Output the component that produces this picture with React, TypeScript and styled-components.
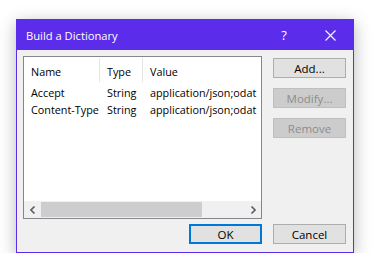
import React from "react";
import styled, { createGlobalStyle } from "styled-components";

const Global = createGlobalStyle`
  html, body { margin: 0; padding: 0; background: #ffffff; }
  body { font-family: "Open Sans", "Noto Sans", "Liberation Sans", sans-serif; }
  #root { padding: 19px 0 0 16px; }
`;

const Window = styled.div`
  width: 338px;
  height: 234px;
  box-sizing: border-box;
  border: 1px solid #5b2ce9;
  background: #f0f0f0;
  box-shadow: 0 4px 16px rgba(0, 0, 0, 0.28);
  display: flex;
  flex-direction: column;
`;

const TitleBar = styled.div`
  height: 30px;
  background: #5b2ce9;
  color: #ffffff;
  display: flex;
  align-items: center;
  padding-left: 9px;
  font-size: 11.2px;
`;

const Title = styled.div`
  flex: 1;
`;

const TitleButton = styled.div`
  width: 46px;
  height: 30px;
  display: flex;
  align-items: center;
  justify-content: center;
  font-size: 13px;
`;

const Body = styled.div`
  flex: 1;
  padding: 6px 7px 8px 6px;
  display: flex;
  flex-direction: column;
  gap: 5px;
`;

const TopRow = styled.div`
  display: flex;
  gap: 11px;
`;

const ListView = styled.div`
  width: 239px;
  height: 163px;
  box-sizing: border-box;
  border: 1px solid #828790;
  background: #ffffff;
  display: flex;
  flex-direction: column;
  overflow: hidden;
  font-size: 10.8px;
  color: #000000;
`;

const Rows = styled.div`
  flex: 1;
  overflow: hidden;
`;

const Row = styled.div<{ $header?: boolean }>`
  display: grid;
  grid-template-columns: 76px 43px minmax(0, 1fr);
  height: ${(p) => (p.$header ? 27 : 17)}px;
  align-items: start;
  white-space: nowrap;
`;

const Cell = styled.div<{ $header?: boolean; $sep?: boolean }>`
  padding-left: 7px;
  margin-top: ${(p) => (p.$header ? "1px" : "0")};
  height: ${(p) => (p.$header ? "24px" : "17px")};
  line-height: ${(p) => (p.$header ? "28px" : "17px")};
  border-right: ${(p) => (p.$sep ? "1px solid #e5e5e5" : "none")};
  box-sizing: border-box;
  overflow: hidden;
`;

const ScrollBar = styled.div`
  height: 17px;
  display: flex;
  background: #f0f0f0;
`;

const Arrow = styled.div`
  width: 17px;
  display: flex;
  align-items: center;
  justify-content: center;
`;

const Thumb = styled.div`
  width: 161px;
  margin: 1px 0;
  background: #cdcdcd;
`;

const Track = styled.div`
  flex: 1;
`;

const ButtonCol = styled.div`
  display: flex;
  flex-direction: column;
  gap: 10px;
  padding-top: 2px;
`;

const Button = styled.div<{ $disabled?: boolean; $default?: boolean }>`
  width: 73px;
  height: 20px;
  box-sizing: border-box;
  display: flex;
  align-items: center;
  justify-content: center;
  font-size: 11.5px;
  background: ${(p) => (p.$disabled ? "#cccccc" : "#e1e1e1")};
  color: ${(p) => (p.$disabled ? "#8c8c8c" : "#000000")};
  border: ${(p) =>
    p.$default ? "2px solid #0078d7" : p.$disabled ? "1px solid #bfbfbf" : "1px solid #adadad"};
`;

const BottomRow = styled.div`
  display: flex;
  justify-content: flex-end;
  gap: 11px;
`;

const rows = [
  ["Accept", "String", "application/json;odat"],
  ["Content-Type", "String", "application/json;odat"],
];

export default function App() {
  return (
    <>
      <Global />
      <Window>
        <TitleBar>
          <Title>Build a Dictionary</Title>
          <TitleButton>?</TitleButton>
          <TitleButton>
            <svg width="11" height="11" viewBox="0 0 11 11">
              <path d="M0.5 0.5 L10.5 10.5 M10.5 0.5 L0.5 10.5" stroke="#ffffff" strokeWidth="1.1" fill="none" />
            </svg>
          </TitleButton>
        </TitleBar>
        <Body>
          <TopRow>
            <ListView>
              <Rows>
                <Row $header>
                  <Cell $header $sep>Name</Cell>
                  <Cell $header $sep>Type</Cell>
                  <Cell $header>Value</Cell>
                </Row>
                {rows.map((r) => (
                  <Row key={r[0]}>
                    <Cell>{r[0]}</Cell>
                    <Cell>{r[1]}</Cell>
                    <Cell>{r[2]}</Cell>
                  </Row>
                ))}
              </Rows>
              <ScrollBar>
                <Arrow>
                  <svg width="6" height="8" viewBox="0 0 6 8">
                    <path d="M4.5 0.5 L1 4 L4.5 7.5" stroke="#606060" strokeWidth="1.6" fill="none" />
                  </svg>
                </Arrow>
                <Thumb />
                <Track />
                <Arrow>
                  <svg width="6" height="8" viewBox="0 0 6 8">
                    <path d="M1.5 0.5 L5 4 L1.5 7.5" stroke="#606060" strokeWidth="1.6" fill="none" />
                  </svg>
                </Arrow>
              </ScrollBar>
            </ListView>
            <ButtonCol>
              <Button>Add...</Button>
              <Button $disabled>Modify...</Button>
              <Button $disabled>Remove</Button>
            </ButtonCol>
          </TopRow>
          <BottomRow>
            <Button $default>OK</Button>
            <Button>Cancel</Button>
          </BottomRow>
        </Body>
      </Window>
    </>
  );
}
